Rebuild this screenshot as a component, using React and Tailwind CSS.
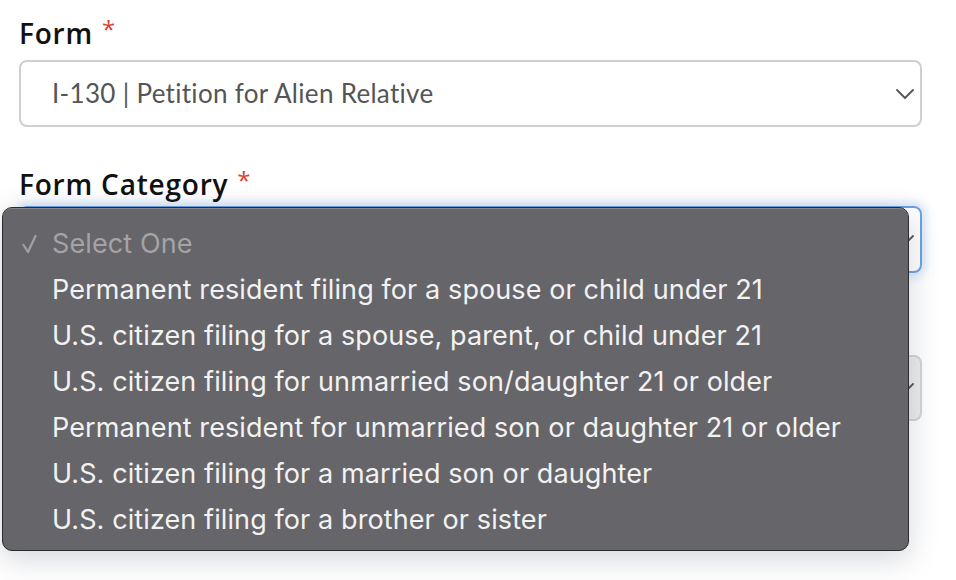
const OPTIONS = [
  'Permanent resident filing for a spouse or child under 21',
  'U.S. citizen filing for a spouse, parent, or child under 21',
  'U.S. citizen filing for unmarried son/daughter 21 or older',
  'Permanent resident for unmarried son or daughter 21 or older',
  'U.S. citizen filing for a married son or daughter',
  'U.S. citizen filing for a brother or sister',
];

function Chevron() {
  return (
    <svg width="18" height="10" viewBox="0 0 18 10" fill="none" stroke="#555" strokeWidth="1.8" strokeLinecap="round" strokeLinejoin="round">
      <polyline points="1,1 9,9 17,1" />
    </svg>
  );
}

function Label({ children }) {
  return (
    <div className="flex items-start gap-[9px] text-[28px] leading-[32px] font-semibold tracking-[0.8px] text-[#111] font-['Open_Sans',sans-serif]">
      <span>{children}</span>
      <span className="text-[#d9412f] text-[24px] leading-[24px] font-normal">*</span>
    </div>
  );
}

export default function App() {
  return (
    <div className="relative w-[956px] h-[580px] bg-white overflow-hidden font-['Lato',sans-serif]">
      <div className="pl-[19px] pr-[34px] pt-[17px]">
        <Label>Form</Label>
        <div className="mt-[11px] h-[67px] rounded-[8px] border-2 border-[#cfcfcf] flex items-center justify-between pl-[31px] pr-[6px]">
          <span className="text-[26px] text-[#555] tracking-[0.3px]">I-130 | Petition for Alien Relative</span>
          <Chevron />
        </div>

        <div className="mt-[41px]">
          <Label>Form Category</Label>
        </div>
        <div className="mt-[6px] h-[67px] rounded-[8px] border-2 border-[#6aa2e6] shadow-[0_0_10px_4px_rgba(120,170,230,0.3)] flex items-center justify-end pr-[6px]">
          <Chevron />
        </div>

        <div className="mt-[82px] h-[66px] rounded-[8px] border-2 border-[#d4d4d4] bg-[#ececec] flex items-center justify-end pr-[6px]">
          <Chevron />
        </div>
      </div>

      {/* native select popup */}
      <div className="absolute left-[2px] top-[207px] w-[907px] h-[344px] rounded-[10px] border border-[#2b2b2d] bg-[#666569] shadow-[0_8px_30px_rgba(60,70,90,0.22)] font-['Inter',sans-serif]">
        <div className="h-full rounded-[9px] border-t border-[#858488] pt-[12px]">
          <div className="flex items-center h-[46px] text-[27px] tracking-[0.1px] text-[#a4a3a6]">
            <span className="w-[49px] pl-[19px] flex items-center">
              <svg width="15" height="20" viewBox="0 0 15 20" fill="none" stroke="#a09fa2" strokeWidth="2.3" strokeLinecap="round" strokeLinejoin="round">
                <polyline points="1.5,11 6,18 13.5,2" />
              </svg>
            </span>
            <span>Select One</span>
          </div>
          {OPTIONS.map((o) => (
            <div key={o} className="flex items-center h-[46px] pl-[49px] text-[27px] tracking-[0.1px] text-[#f2f2f2]">
              {o}
            </div>
          ))}
        </div>
      </div>
    </div>
  );
}
